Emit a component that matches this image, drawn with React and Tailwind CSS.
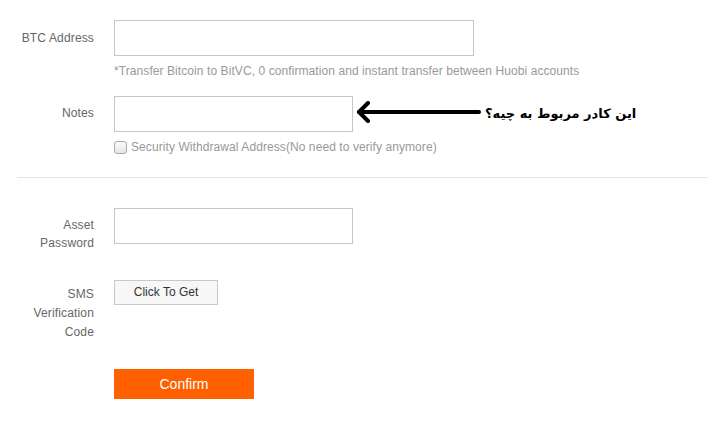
import React from 'react';

function Label({ children, className = '' }) {
  return (
    <div className={`w-[94px] shrink-0 pl-[17px] text-right text-[12px] tracking-[0.15px] text-[#666] ${className}`}>
      {children}
    </div>
  );
}

function Arrow() {
  return (
    <svg width="126" height="26" viewBox="0 0 126 26" className="ml-[2px] shrink-0">
      <path d="M124 11 L4 11" stroke="#000" strokeWidth="4" strokeLinecap="round" />
      <path d="M13 2 L4 11 L13 20" fill="none" stroke="#000" strokeWidth="4" strokeLinecap="round" strokeLinejoin="round" />
    </svg>
  );
}

export default function App() {
  const input = 'h-[36px] border border-[#c6c6c6] bg-white';

  return (
    <div className="w-[708px] h-[433px] bg-white font-['Liberation_Sans',Arial,sans-serif] overflow-hidden">
      <div className="pt-[20px]">
        <div className="flex">
          <Label className="pt-[9px] leading-[18px]">BTC Address</Label>
          <div className="ml-[20px]">
            <div className={`${input} w-[360px]`} />
            <div className="mt-[6px] text-[12px] leading-[18px] tracking-[0.08px] text-[#999]">
              *Transfer Bitcoin to BitVC, 0 confirmation and instant transfer between Huobi accounts
            </div>
          </div>
        </div>

        <div className="mt-[16px] flex">
          <Label className="pt-[8px] leading-[18px]">Notes</Label>
          <div className="ml-[20px]">
            <div className="flex items-center">
              <div className={`${input} w-[239px]`} />
              <Arrow />
              <span
                dir="rtl"
                className="ml-[4px] font-['DejaVu_Sans',Tahoma,sans-serif] text-[13px] font-bold text-black"
              >
                این کادر مربوط به چیه؟
              </span>
            </div>
            <div className="mt-[6px] flex items-center gap-[4px] text-[12px] leading-[18px] tracking-[0.08px] text-[#999]">
              <span className="inline-block h-[13px] w-[13px] rounded-[3px] border border-[#a9a9a9] bg-gradient-to-b from-[#fbfbfb] to-[#e6e6e6]" />
              <span>Security Withdrawal Address(No need to verify anymore)</span>
            </div>
          </div>
        </div>

        <div className="ml-[17px] mt-[21px] border-t border-[#e6e6e6]" />

        <div className="mt-[30px] flex">
          <Label className="pt-[8px] leading-[18px]">Asset Password</Label>
          <div className="ml-[20px]">
            <div className={`${input} w-[239px]`} />
          </div>
        </div>

        <div className="mt-[27px] flex">
          <Label className="pt-[6px] leading-[19px]">SMS Verification Code</Label>
          <div className="ml-[20px]">
            <button className="h-[25px] w-[104px] border border-[#c8c8c8] bg-[#f7f7f7] text-[12px] text-[#333]">
              Click To Get
            </button>
          </div>
        </div>

        <div className="mt-[27px] flex">
          <div className="w-[94px] shrink-0" />
          <button className="ml-[20px] h-[30px] w-[140px] bg-[#ff6000] text-[14px] text-white">
            Confirm
          </button>
        </div>
      </div>
    </div>
  );
}
